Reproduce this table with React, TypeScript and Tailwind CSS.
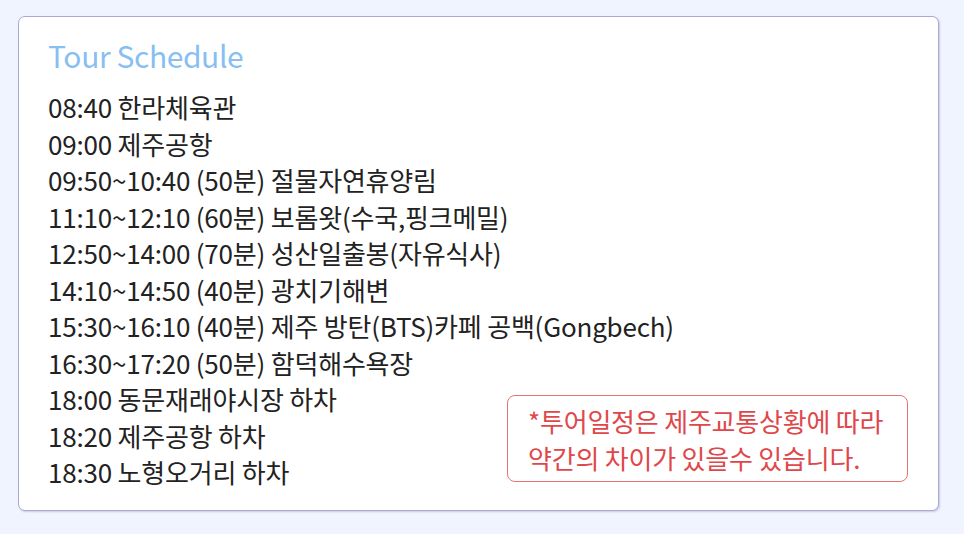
import React from "react";

const top = [
  "08:40 한라체육관",
  "09:00 제주공항",
  "09:50~10:40 (50분) 절물자연휴양림",
  "11:10~12:10 (60분) 보롬왓(수국,핑크메밀)",
  "12:50~14:00 (70분) 성산일출봉(자유식사)",
  "14:10~14:50 (40분) 광치기해변",
  "15:30~16:10 (40분) 제주 방탄(BTS)카페 공백(Gongbech)",
  "16:30~17:20 (50분) 함덕해수욕장",
];
const bottom = ["18:00 동문재래야시장 하차", "18:20 제주공항 하차", "18:30 노형오거리 하차"];

function Line({ t }: { t: string }) {
  return (
    <div className="text-[26px] leading-[36.5px] text-[#222] tracking-[-0.2px] whitespace-nowrap">{t}</div>
  );
}

export default function App() {
  return (
    <div
      className="w-[964px] h-[534px] bg-[#f0f4fe] pt-[16px] pl-[18px]"
      style={{ fontFamily: '"Noto Sans CJK KR", "Noto Sans", sans-serif' }}
    >
      <div className="w-[921px] h-[495px] bg-white border border-[#aaa8d4] rounded-[7px] shadow-[1px_1px_2px_rgba(120,118,180,0.35)] pl-[29px] pr-[30px] pt-[18px]">
        <div className="text-[30px] leading-[40px] text-[#88bff0] tracking-[-0.4px]">Tour Schedule</div>
        <div className="mt-[14px] flex flex-col">
          {top.map((l) => (
            <Line key={l} t={l} />
          ))}
          <div className="flex justify-between items-start">
            <div className="flex flex-col">
              {bottom.map((l) => (
                <Line key={l} t={l} />
              ))}
            </div>
            <div className="shrink-0 mt-[14px] w-[401px] h-[87px] border border-[#e57373] rounded-[8px] flex flex-col justify-center pl-[20px] text-[#e0474a] text-[26px] leading-[37px] tracking-[-0.2px] whitespace-nowrap">
              <div>*투어일정은 제주교통상황에 따라</div>
              <div>약간의 차이가 있을수 있습니다.</div>
            </div>
          </div>
        </div>
      </div>
    </div>
  );
}
